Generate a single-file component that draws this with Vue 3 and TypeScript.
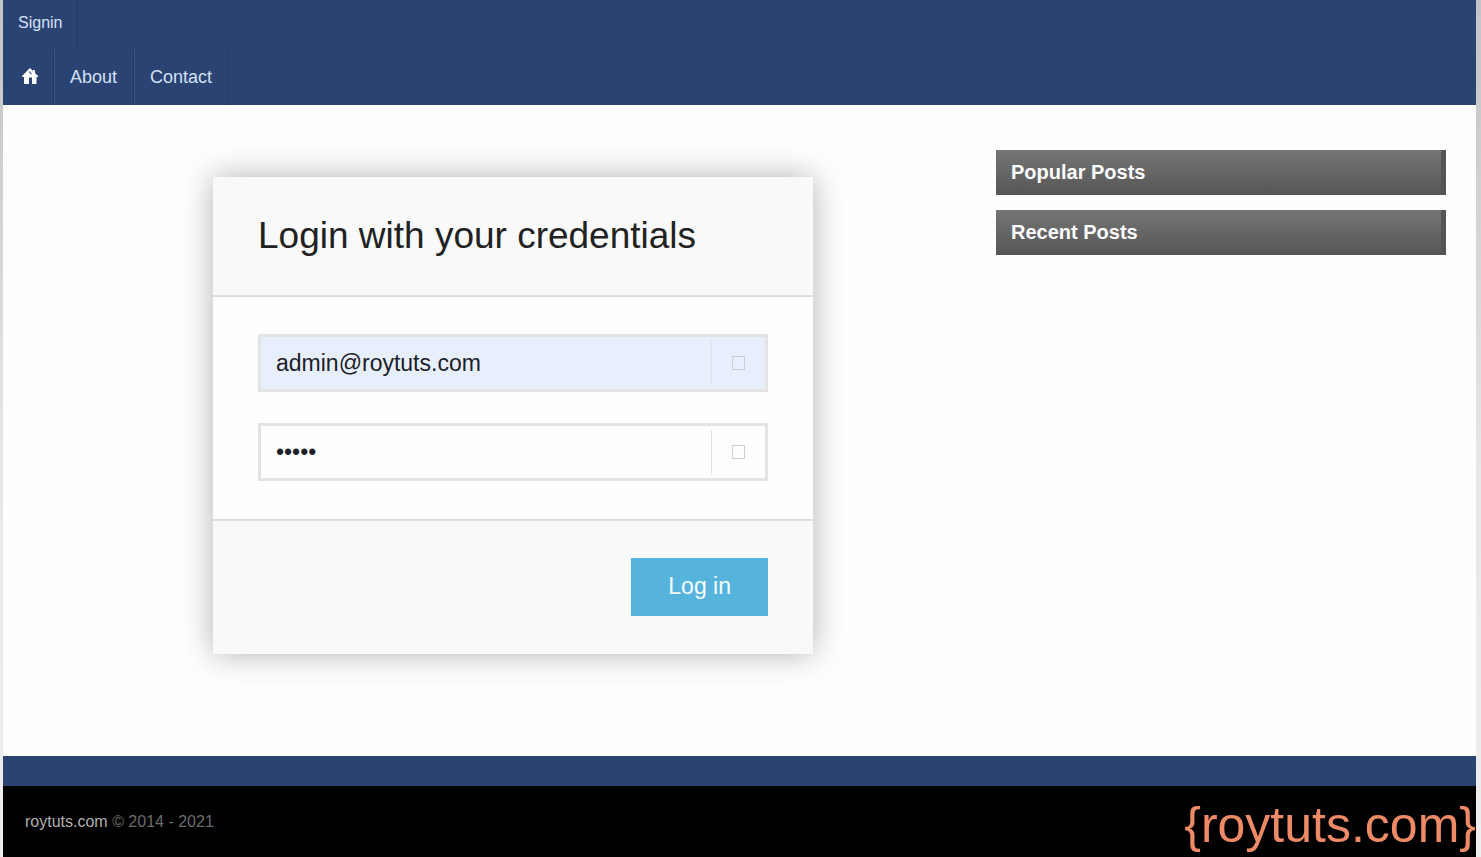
<script setup lang="ts">
import { ref } from 'vue'

const email = ref('admin@roytuts.com')
const password = ref('admin')
const links = ['About', 'Contact']
const widgets = ['Popular Posts', 'Recent Posts']
</script>

<template>
  <div class="page">
    <header class="header">
      <nav class="bar top" aria-label="Account">
        <a href="#signin">Signin</a>
      </nav>
      <nav class="bar main-nav" aria-label="Main">
        <a href="#home" class="home" aria-label="Home">
          <svg viewBox="0 0 16 16" width="16" height="16" aria-hidden="true">
            <path
              fill="#fff"
              fill-rule="evenodd"
              d="M8 0 L11 3 V2 H13 V5 L16 8 V9 H14.5 V16 H10 V9.5 H7 V16 H2 V9 H0 V8 Z"
            />
            <path d="M7 3.5 L9.5 6" fill="none" stroke="#5a6f98" stroke-width="1.2" />
          </svg>
        </a>
        <a v-for="link in links" :key="link" :href="'#' + link.toLowerCase()">{{ link }}</a>
      </nav>
    </header>

    <div class="content">
      <main class="primary">
        <form class="card" @submit.prevent>
          <div class="card-head">
            <h1>Login with your credentials</h1>
          </div>
          <div class="card-body">
            <div class="field filled">
              <input v-model="email" type="email" aria-label="Email" />
              <span class="addon"><i class="box"></i></span>
            </div>
            <div class="field">
              <input v-model="password" type="password" aria-label="Password" />
              <span class="addon"><i class="box"></i></span>
            </div>
          </div>
          <div class="card-foot">
            <button type="submit">Log in</button>
          </div>
        </form>
      </main>
      <aside class="sidebar">
        <h2 v-for="title in widgets" :key="title">{{ title }}</h2>
      </aside>
    </div>

    <footer>
      <div class="stripe"></div>
      <div class="legal">
        <p><a href="#top">roytuts.com</a> © 2014 - 2021</p>
        <span class="brand">{roytuts.com}</span>
      </div>
    </footer>
  </div>
</template>

<style>
body {
  background: linear-gradient(#c2c5c8, #cccccc 15%, #e8e8e8 55%, #eeeeee);
}
</style>

<style scoped>
.page {
  display: flex;
  flex-direction: column;
  min-height: 100vh;
  margin: 0 5px 0 3px;
  background: #fefefe;
  font-family: "Liberation Sans", Arial, sans-serif;
}
.header {
  background: #2a4373;
}
.bar {
  display: flex;
}
.bar a {
  display: flex;
  align-items: center;
  box-sizing: border-box;
  padding: 0 15px;
  color: #d5e0f5;
  text-decoration: none;
  border-right: 1px solid #223965;
}
.top a {
  height: 49px;
  padding: 0 15px 4px;
  font-size: 16px;
}
.main-nav a {
  height: 56px;
  padding: 0 16px 0 15px;
  font-size: 18px;
  border-left: 1px solid #3a5383;
}
.main-nav .home {
  padding: 0 15px 2px 19px;
  border-left: 0;
}
.content {
  display: flex;
  flex: 1;
  padding: 45px 30px 102px;
}
.primary {
  flex: 1;
  display: flex;
  justify-content: center;
  align-items: flex-start;
  padding-top: 27px;
  padding-right: 3px;
}
.card {
  width: 600px;
  background: #fefefe;
  box-shadow: 0 0 30px rgba(0, 0, 0, 0.3);
}
.card-head {
  padding: 36px 45px;
  background: #f9f9f9;
  border-bottom: 2px solid #dedede;
}
h1 {
  margin: 0;
  font-size: 37px;
  line-height: 46px;
  font-weight: 400;
  color: #222;
}
.card-body {
  display: grid;
  gap: 31px;
  padding: 37px 45px 38px;
}
.field {
  display: flex;
  align-items: center;
  box-sizing: border-box;
  height: 58px;
  border: 3px solid #e3e3e3;
  background: #fefefe;
}
.filled {
  background: #e8effc;
}
input {
  flex: 1;
  min-width: 0;
  height: 40px;
  padding: 0 15px;
  border: 0;
  outline: 0;
  background: transparent;
  font: 23px "Liberation Sans", Arial, sans-serif;
  color: #1c2027;
}
.addon {
  display: flex;
  align-items: center;
  justify-content: center;
  width: 53px;
  height: 45px;
  border-left: 1px solid #dfe2e8;
}
.box {
  width: 11px;
  height: 12px;
  border: 1px solid #cbced8;
}
.card-foot {
  display: flex;
  justify-content: flex-end;
  padding: 37px 45px 38px;
  background: #f9f9f9;
  border-top: 2px solid #dedede;
}
button {
  height: 58px;
  padding: 0 37px 2px;
  border: 0;
  background: #56b4dc;
  color: #f4fdff;
  font: 23px "Liberation Sans", Arial, sans-serif;
}
.sidebar {
  width: 450px;
}
h2 {
  box-sizing: border-box;
  height: 45px;
  margin: 0 0 15px;
  padding: 0 15px;
  border-right: 5px solid #555;
  background: linear-gradient(#757575, #565656);
  color: #fff;
  font-size: 20px;
  line-height: 45px;
}
.stripe {
  height: 30px;
  background: #2a4373;
}
.legal {
  display: flex;
  align-items: center;
  justify-content: space-between;
  height: 71px;
  padding-left: 22px;
  background: #000;
  color: #6b6b6b;
}
.legal p {
  margin: 0;
  font-size: 16px;
}
.legal a {
  color: #b0b0b0;
  text-decoration: none;
}
.brand {
  padding-top: 6px;
  color: #ef8a67;
  font-size: 50px;
  line-height: 56px;
}
</style>
